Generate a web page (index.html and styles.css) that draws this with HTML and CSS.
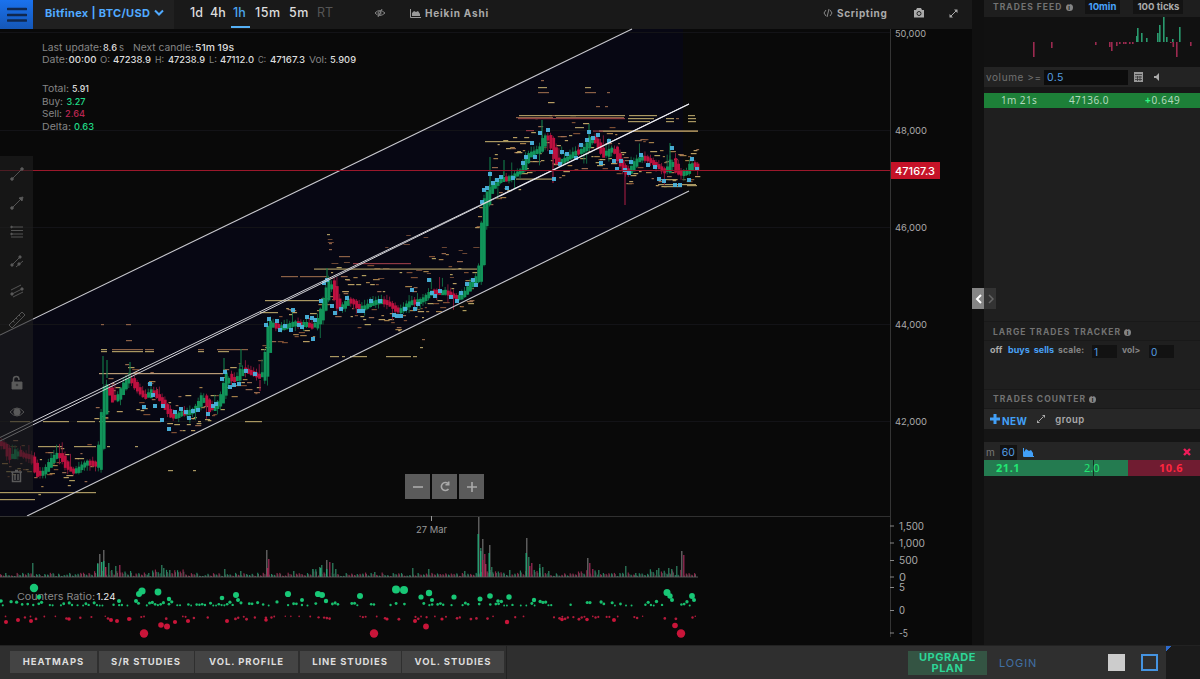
FILE: index.html
```html
<!DOCTYPE html>
<html lang="en">
<head>
<meta charset="utf-8">
<title>Bitfinex BTC/USD</title>
<link rel="stylesheet" href="styles.css">
</head>
<body>
<div class="app">
  <div class="workspace">
    <main class="main">
      <header class="topbar">
        <button class="menu" aria-label="Menu"><svg width="20" height="16"><path d="M1 2H19M1 8H19M1 13.500H19" stroke="#10284f" stroke-width="2.600" stroke-linecap="round"/></svg></button>
        <div class="pair"><span>Bitfinex | BTC/USD</span><svg width="12" height="8"><path d="M2 1.500L6 5.500L10 1.500" fill="none" stroke="#50aaff" stroke-width="2"/></svg></div>
        <nav class="frames"><span class="f1">1d</span><span class="f2">4h</span><span class="f3 active">1h</span><span class="f4">15m</span><span class="f5">5m</span><span class="f6">RT</span></nav>
        <svg class="hide" width="12" height="10" fill="none" stroke="#858585"><path d="M1 5Q5.500 0 11 5Q5.500 10 1 5M8 1L4 9"/><circle cx="5.500" cy="5" r="1.500"/></svg>
        <div class="candles"><svg width="11" height="9"><path d="M.5 0V8.500H11" stroke="#999" fill="none"/><path d="M2 7V4L4 2L6 3L8 2L10 5V7Z" fill="#999"/></svg><span>Heikin Ashi</span></div>
        <div class="script"><svg width="10" height="8" fill="none" stroke="#888"><path d="M3 1L1 4L3 7M7 1L9 4L7 7M6 0L4 8"/></svg><span>Scripting</span></div>
        <svg class="camera" width="12" height="10"><path d="M1 2H3L4 0H8L9 2H11V9.500H1Z" fill="#aaa"/><circle cx="6" cy="5.500" r="2" fill="none" stroke="#222"/></svg>
        <svg class="expand" width="9" height="9"><path d="M2 7L7 2" stroke="#aaa"/><path d="M5 .5H8.500V4ZM.5 5V8.500H4Z" fill="#aaa"/></svg>
      </header>
      <section class="chart-area">
        <svg id="chart" viewBox="0 29 972 616" width="972" height="616"></svg>
        <div class="tools">
          <svg viewBox="0 0 18 18"><path d="M4 14L14 4"/><circle cx="4" cy="14" r="1.300"/><circle cx="14" cy="4" r="1.300"/></svg>
          <svg viewBox="0 0 18 18"><path d="M4 14L13 5M11 4L15 3L14 7Z"/><circle cx="4" cy="14" r="1.300"/></svg>
          <svg viewBox="0 0 18 18"><path d="M3 4H15M3 7.500H15M3 11H15M3 14H15"/><circle cx="3.500" cy="4" r=".8"/><circle cx="3.500" cy="11" r=".8"/></svg>
          <svg viewBox="0 0 18 18"><path d="M4 12L12 4M8 14L15 8"/><circle cx="4" cy="12" r="1.200"/><circle cx="12" cy="4" r="1.200"/><circle cx="11" cy="11" r="1.200"/></svg>
          <svg viewBox="0 0 18 18"><path d="M3 8L13 3M4 12L14 7M5 15L15 10"/><circle cx="4" cy="12" r="1.200"/><circle cx="14" cy="7" r="1.200"/></svg>
          <svg viewBox="0 0 18 18"><path class="hollow" d="M1 14L14 1L17 4L4 17ZM5 10L6.500 11.500M8 7L9.500 8.500M11 4L12.500 5.500"/></svg>
          <svg class="lock" viewBox="0 0 18 18"><path d="M4 8H14V15H4Z"/><path class="hollow bold" d="M5.500 8V5Q5.500 2.500 8.500 2.500Q11 2.500 11 6"/><circle class="keyhole" cx="9" cy="11" r="1.300"/></svg>
          <svg viewBox="0 0 18 18"><path class="hollow" d="M2 9Q9 1 16 9Q9 17 2 9"/><circle cx="9" cy="9" r="3.200"/></svg>
          <svg class="trash" viewBox="0 0 18 18"><path class="hollow bold" d="M3 5H14M7 3.500H10M4.500 5V14.500H12.500V5M7 7V13M10 7V13"/></svg>
        </div>
        <div class="zoomer"><button><svg width="12" height="12"><path d="M1 6H11"/></svg></button><button><svg width="12" height="12"><path d="M9 2.500A4 4 0 1 0 9.500 8M6.500 3.700H9.700V.5"/></svg></button><button><svg width="12" height="12"><path d="M1 6H11M6 1V11"/></svg></button></div>
      </section>
    </main>
    <div class="gutter"></div>
    <aside class="side">
      <div class="head feed"><span class="title">TRADES FEED</span><i class="info">i</i><b class="chip on">10min</b><b class="chip">100 ticks</b></div>
      <svg id="feed" width="216" height="50" viewBox="984 17 216 50"></svg>
      <div class="volume"><span>volume &gt;=</span><b>0.5</b><svg width="9" height="10"><path d="M0 0H9V10H0Z" fill="#999"/><path d="M1 2.500H8M1 5H8M1 7.500H8M3.500 4V9M6 4V9" stroke="#333" stroke-width=".8"/></svg><svg class="speaker" width="6" height="8"><path d="M0 3H2L5 0V8L2 5H0Z" fill="#aaa"/></svg></div>
      <div class="trade"><span>1m 21s</span><span>47136.0</span><span><b>+</b>0.649</span></div>
      <div class="filler"></div>
      <div class="head large"><span class="title">LARGE TRADES TRACKER</span><i class="info">i</i></div>
      <div class="tracker"><b class="off">off</b><b class="blue">buys</b><b class="blue">sells</b><b class="lab scale">scale:</b><em>1</em><b class="lab vol">vol&gt;</b><em class="zero">0</em></div>
      <div class="head counter"><span class="title">TRADES COUNTER</span><i class="info">i</i></div>
      <div class="new"><svg width="10" height="10"><path d="M5 0V10M0 5H10" stroke="#42a0f8" stroke-width="3"/></svg><b>NEW</b><svg class="grow" width="8" height="8"><path d="M2 6L6 2" stroke="#aaa"/><path d="M5 0H8V3ZM0 5V8H3Z" fill="#aaa"/></svg><span>group</span></div>
      <div class="strip"></div>
      <div class="minutes"><span>m</span><em>60</em><svg width="11" height="9"><path d="M.5 0V8.500H11" stroke="#42a0f8" fill="none"/><path d="M1 8V4L3 1L6 3L8 2L10 5V8Z" fill="#42a0f8"/></svg><svg class="close" width="8" height="8"><path d="M1 1L7 7M7 1L1 7" stroke="#f01c5b" stroke-width="2.400"/></svg></div>
      <div class="ratio"><div class="buy"><b>21.1</b><span>2.0</span></div><div class="sell"><b>10.6</b></div></div>
      <div class="handle"><span><svg width="7" height="10"><path d="M6 1L2 5L6 9" fill="none" stroke="#fff" stroke-width="2"/></svg></span><span class="dim"><svg width="7" height="10"><path d="M2 1L6 5L2 9" fill="none" stroke="#666" stroke-width="1.500"/></svg></span></div>
    </aside>
  </div>
  <footer class="footer">
    <div class="tabs"><b class="t1">HEATMAPS</b><b class="t2">S/R STUDIES</b><b class="t3">VOL. PROFILE</b><b class="t4">LINE STUDIES</b><b class="t5">VOL. STUDIES</b></div>
    <b class="upgrade">UPGRADE<br>PLAN</b><span class="login">LOGIN</span><i class="swatch"></i><i class="swatch outline"></i><div class="corner"></div>
  </footer>
</div>
<script src="chart.js"></script>
</body>
</html>
```
FILE: styles.css
```css
* { box-sizing: border-box; }
body { margin: 0; background: #090909; font-family: Inter, "Open Sans", sans-serif; color: #aaa; overflow: hidden; }
button { border: 0; padding: 0; }
svg { display: block; flex: none; }
.app { width: 1200px; height: 679px; display: flex; flex-direction: column; }
.workspace { height: 645px; display: flex; }
.main { width: 972px; }
.topbar { height: 29px; background: #191919; display: flex; align-items: center; white-space: nowrap; padding-bottom: 3px; }
.menu { width: 33px; height: 29px; background: linear-gradient(#1a72ee, #1557b7); display: grid; place-items: center; margin-bottom: -3px; }
.pair { width: 141px; height: 29px; margin-bottom: -3px; padding: 0 0 3px 12px; display: flex; align-items: center; gap: 3px; background: #202020; color: #50aaff; font-size: 11px; font-weight: 700; letter-spacing: .32px; }
.frames { display: flex; margin-left: 16px; width: 184px; color: #ddd; font-size: 12.5px; font-weight: 500; line-height: 29px; height: 29px; padding-top: 2px; }
.frames span { height: 27px; line-height: 23px; }
.f1 { width: 20px; }
.f2 { width: 21px; }
.frames .active { width: 19px; margin-right: 5px; padding-left: 2px; color: #4ba6ed; border-bottom: 2px solid #55b0f5; }
.f4 { width: 34px; letter-spacing: .5px; }
.f5 { width: 28px; letter-spacing: .4px; }
.frames .f6 { color: #555; letter-spacing: 0; font-weight: 400; }
.hide { margin-right: 24px; }
.candles, .script { display: flex; align-items: center; gap: 4px; font-size: 10px; font-weight: 700; letter-spacing: .8px; color: #aaa; }
.candles { width: 413px; }
.script { width: 90px; letter-spacing: .65px; }
.camera { margin-right: 24px; }
.chart-area { position: relative; height: 616px; background: #090909; }
#chart { overflow: visible; }
#chart text { font-family: Inter, sans-serif; fill: #aaa; }
.tools { position: absolute; left: 0; top: 127px; width: 33px; height: 334px; padding-top: 9px; background: rgba(30, 30, 30, .62); display: flex; flex-direction: column; gap: 11.200px; align-items: center; }
.tools svg { width: 18px; height: 18px; fill: #5a5a5a; stroke: #5a5a5a; stroke-width: .9; }
.tools .hollow { fill: none; }
.tools .bold { stroke-width: 1.5; }
.tools .keyhole { fill: #151518; }
.tools .lock { margin-top: 34px; }
.tools .trash { margin-top: 34px; }
.zoomer { position: absolute; left: 405px; top: 445px; display: flex; gap: 2px; }
.zoomer button { width: 25px; height: 25px; background: #5b5b5b; display: grid; place-items: center; }
.zoomer svg { fill: none; stroke: #aaa; stroke-width: 1.600; }
.gutter { width: 12px; background: #101010; }
.side { position: relative; width: 216px; background: #171717; display: flex; flex-direction: column; }
.side > * { flex: none; }
.head { display: flex; align-items: center; padding-left: 9px; background: #1e1e1e; font-size: 8px; }
.title { font-weight: 700; font-size: 8.500px; letter-spacing: 1.05px; color: #727272; white-space: nowrap; }
.info { width: 7px; height: 7px; margin-left: 3px; border-radius: 50%; background: #858585; color: #111; font: 700 6px/7px Inter; text-align: center; }
.feed { height: 17px; padding-bottom: 3px; white-space: nowrap; }
.chip { height: 14px; line-height: 14px; margin-left: 12px; padding: 0 4px; background: #131313; color: #aaa; font-size: 9.600px; }
.chip.on { color: #48a2fb; }
.chip + .chip { margin-left: 13px; }
#feed { background: #111; }
.volume { height: 20px; padding-left: 2px; background: #232323; display: flex; align-items: center; font-size: 10px; white-space: nowrap; }
.volume span { width: 58px; color: #717171; letter-spacing: .6px; }
.volume b { width: 84px; height: 15px; padding-left: 3px; background: #0c0c0c; font-size: 10.500px; line-height: 15px; color: #549ee2; font-weight: 400; margin-right: 6px; letter-spacing: .4px; }
.speaker { margin-left: 11px; }
.trade { margin-top: 6px; height: 15px; display: flex; background: #1d8038; color: #b2d9bd; font: 10px/15px "Noto Sans", sans-serif; letter-spacing: .4px; }
.trade span:nth-child(1) { width: 85px; padding-left: 17px; }
.trade span:nth-child(2) { width: 76px; }
.trade span:nth-child(3) { letter-spacing: .7px; }
.trade b { color: #31f584; }
.filler { height: 213px; background: #1f1f1f; }
.large { height: 20px; padding-top: 2px; border-block: 1px solid #191919; }
.tracker { height: 48px; background: #1f1f1f; display: flex; align-items: flex-start; padding: 3px 0 0 6px; font-size: 9px; line-height: 12px; white-space: nowrap; }
.off { width: 18px; color: #aaa; }
.blue { color: #49a1f6; margin-right: 4px; }
.tracker .lab { color: #858585; font-size: 8.500px; }
.tracker .scale { width: 34px; letter-spacing: .2px; }
.tracker .vol { width: 27px; }
.tracker em { width: 25px; height: 13px; margin: 1px 5px 0 0; padding-left: 2px; background: #121212; font: 10px/14px Inter; color: #549ee2; }
.counter { height: 20px; background: #1f1f1f; border-block: 1px solid #191919; }
.new { height: 20px; background: #272727; display: flex; align-items: center; padding-left: 6px; font-size: 9.500px; }
.new b { color: #42a0f8; margin-left: 2px; padding-top: 3px; font-size: 10px; letter-spacing: .4px; }
.grow { margin-left: 10px; }
.new span { margin-left: 10px; font-weight: 600; color: #aaa; letter-spacing: .45px; }
.strip { height: 13px; background: #151515; }
.minutes { height: 18px; background: #252525; display: flex; align-items: center; padding: 2px 9px 0 2px; font-size: 10px; color: #777; }
.minutes em { margin: 0 6px 0 5px; height: 15px; width: 17px; font: 10.500px/15px Inter; color: #549ee2; background: #121212; text-align: center; }
.close { margin-left: auto; }
.ratio { height: 16px; display: flex; color: #22e773; font: 11px/16px "Noto Sans"; }
.buy { width: 144px; background: linear-gradient(90deg, #247b50 109px, #142c20 109px, #142c20 110px, #247b50 110px); display: flex; padding-left: 12px; }
.buy b { width: 88px; }
.buy b, .sell { letter-spacing: .55px; }
.sell { flex: 1; padding-left: 31px; color: #ff263f; background: #701c31; }
.handle { position: absolute; top: 288px; left: -12px; display: flex; }
.handle span { width: 12px; height: 21px; background: #858585; display: grid; place-items: center; }
.handle .dim { background: #333; }
.footer { height: 34px; display: flex; align-items: center; background: #2f2f2f; border-top: 1px solid #222; }
.tabs { width: 507px; height: 33px; padding: 5px 0 6px 10px; display: flex; gap: 1.500px; border-right: 1px solid #222; }
.tabs b { background: #444; font-size: 9.500px; line-height: 22px; text-align: center; color: #ddd; letter-spacing: .95px; white-space: nowrap; }
.t1 { width: 87px; }
.t2 { width: 95px; }
.t3 { width: 103px; }
.t4 { width: 101px; }
.t5 { width: 102px; }
.upgrade { width: 79px; height: 24px; margin-left: 401px; padding-top: 1px; background: #345443; color: #2dd697; font-size: 11px; line-height: 11.500px; text-align: center; letter-spacing: .5px; }
.login { width: 109px; margin-left: 12px; color: #4170a5; font-size: 11px; letter-spacing: .9px; }
.swatch { width: 17px; height: 17px; background: #ccc; margin-right: 16px; }
.outline { border: 2px solid #4594e1; background: none; margin-right: 8px; }
.corner { width: 34px; height: 34px; background: linear-gradient(135deg, #2c6acc 4px, #1b1b1b 4px); }
```
FILE: chart.js
```js
const NS = 'http://www.w3.org/2000/svg';
const chart = document.getElementById('chart');
let seed = 17;
const rnd = () => (seed = (seed * 16807) % 2147483647) / 2147483647;

function add(parent, tag, attrs, text) {
  const el = document.createElementNS(NS, tag);
  for (const k in attrs) el.setAttribute(k, attrs[k]);
  if (text !== undefined) el.textContent = text;
  parent.appendChild(el);
}
const line = (x1, y1, x2, y2, stroke, w = 1) => add(chart, 'line', {x1, y1, x2, y2, stroke, 'stroke-width': w});
const rect = (x, y, width, height, fill, opacity = 1) => add(chart, 'rect', {x, y, width, height, fill, opacity});
const label = (x, y, width, text, color, size = 10, weight = 400) =>
  add(chart, 'text', {x, y, textLength: width, lengthAdjust: 'spacingAndGlyphs', style: `fill:${color};font-size:${size}px;font-weight:${weight}`}, text);

// Trend channel
add(chart, 'path', {d: 'M0 335L632 29H683V194L27 516H0Z', fill: '#070713'});
[32.5, 130.5, 227.5, 324.5, 421.5].forEach(y => line(0, y, 890, y, '#131317'));

// Mid price of the candles at turning points
const price = [0,443,5,450,8,460,12,456,15,450,20,456,28,456,31,461,36,476,40,474,44,470,50,460,56,453,60,457,65,467,73,473,80,466,88,461,92,466,96,464,99,440,102,405,105,383,108,392,112,401,116,398,119,392,125,380,130,379,134,387,140,394,145,399,150,389,155,396,160,401,166,411,172,419,178,413,185,413,192,411,197,404,201,396,205,402,209,411,214,407,219,400,223,385,226,374,230,381,236,379,240,369,245,371,252,374,260,378,263,370,266,342,268,326,272,322,275,328,280,328,286,326,293,323,300,325,306,324,312,328,318,318,323,300,328,281,331,285,334,298,338,310,343,305,347,299,352,302,358,310,362,308,370,303,380,301,388,304,396,312,402,309,408,302,415,302,420,301,427,294,430,291,437,293,445,292,452,297,457,299,464,292,470,283,474,280,478,272,480,240,483,208,488,190,495,183,500,178,505,180,512,176,520,170,525,158,530,152,535,153,539,148,543,137,547,136,551,149,555,163,560,161,567,158,573,152,580,152,585,146,590,137,594,141,600,152,603,157,608,150,612,148,618,162,625,174,629,170,635,160,642,157,650,162,658,168,664,173,668,165,671,158,675,171,680,175,686,172,690,163,694,165,698,170];
function mid(x) {
  for (let i = 0; i < price.length - 2; i += 2)
    if (x <= price[i + 2]) return price[i + 1] + (price[i + 3] - price[i + 1]) * (x - price[i]) / (price[i + 2] - price[i]);
  return price[price.length - 1];
}

// Scattered liquidity levels
const tones = ['#b58c50', '#ccae6b', '#8a5737', '#a57354', '#c2ad67'];
for (let x = 2; x < 697; x += 1.4) {
  const busy = x > 335 && x < 480 || x > 485;
  if (rnd() > (busy ? .85 : .6)) continue;
  const below = rnd() < .6;
  let y = mid(x) + (below ? 5 + rnd() * 14 : -8 - rnd() * (x > 600 ? 15 : busy ? 32 : 10));
  if (x > 90 && x < 108 || x > 257 && x < 272 || x > 474 && x < 490) y = mid(x + 8) + 12 + rnd() * 12;
  rect(x, Math.round(y), 2 + rnd() * 5, 1.2, tones[Math.floor(rnd() * 5)], .9);
}
for (let i = 0; i < 20; i++) rect(325 + rnd() * 155, Math.round(235 + rnd() * 45), 3 + rnd() * 4, 1, '#8e5c40', .75);

// Long horizontal levels
const gold = '#a99761', dark = '#8b6045', red = '#8e3843';
[[0,492,96,gold],[0,499,35,gold],[43,421,26,gold],[77,421,18,gold],[99,421,62,gold],[10,421,20,gold],[245,421,17,gold],
 [38,446,24,gold],[74,446,22,gold],[107,446,3,gold],[135,446,3,gold],[99,373,124,'#b99b76'],[101,349,6,gold],[101,351,6,gold],[112,349,31,dark],[112,351,31,gold],
 [145,349,9,dark],[145,351,9,gold],[198,349,6,dark],[198,351,6,gold],[217,349,31,dark],[218,351,11,gold],[126,340,6,dark],
 [168,470,5,gold],[193,470,3,gold],[101,324,3,dark],[126,324,5,dark],[265,300,58,gold],[281,276,17,dark],[300,276,27,dark],[314,268.5,163,gold],
 [353,263,58,red],[339,256,11,dark],[260,312,18,gold],[330,356,9,gold],[342,356,3,gold],[350,356,17,gold],[386,356,25,gold],[413,356,4,gold],
 [420,347,3,gold],[422,339,3,dark],[327,234,3,gold],[329,243,3,dark],[329,249,3,dark],
 [519,115,33,gold],[555,115,70,gold],[518,118,107,red],[516,117,37,dark],[556,117,68,dark],[629,115,28,gold],[628,118,26,gold],[628,121,22,gold],[666,118,8,gold],[666,121,8,gold],[676,118,3,dark],[688,115,7,gold],[688,118,8,gold],[688,121,8,gold],
 [538,87,9,gold],[538,92,11,dark],[585,87,6,gold],[585,92,11,dark],[541,80,3,dark],[607,92,3,dark],[485,141,45,gold],[599,130.500,99,'#e0bb75'],[593,130.500,10,red],
 [516,178.500,39,gold],[657,179,20,gold],[658,184,38,gold],[664,186,18,gold],[687,185,10,gold],[575,127,9,gold],[526,130,8,red],[596,106,4,dark],[605,106,3,dark]
].forEach(([x, y, w, c]) => rect(x, y, w, 1.2, c));

// Heikin Ashi candles
for (let i = 0; i < 252; i++) {
  const x = i * 2.775, a = mid(Math.max(0, x - 4)), b = mid(x + 1), up = b < a;
  const c = up ? '#11945a' : '#bd103f', h = Math.max(5, Math.abs(b - a) * 1.25), y = (a + b) / 2;
  const long = rnd() > .82 ? 13 : 4;
  rect(x + .7, y - h / 2 - rnd() * long - 1, .9, h + 3 + rnd() * long, up ? '#147347' : '#8d193b');
  rect(x, y - h / 2, 2.9, h, c);
}
[[103,356,384,1],[107,360,378,1],[130,362,380,1],[224,358,372,1],[241,349,367,1],[260,380,391,0],[327,268,283,1],[490,157,190,1],[504,160,176,1],[542,120,138,1],[589,124,138,1],[625,172,205,0],[670,143,160,1],[553,154,183,0]].forEach(([x, y1, y2, up]) => line(x, y1, x, y2, up ? '#127747' : '#971b3e', 1.2));

// Signal markers
const marks = [150,384,153,395,144,407,155,406,163,406,162,420,169,429,175,412,181,409,186,412,189,418,193,411,198,410,208,414,213,406,216,404,222,379,225,372,230,387,234,385,239,384,246,371,255,374,266,325,269,319,277,321,280,330,285,326,291,330,293,310,299,325,302,327,307,317,312,318,313,339,315,320,321,301,324,283,327,280,332,306,335,313,341,309,347,298,359,311,363,311,371,301,380,301,394,315,397,316,401,316,405,309,412,290,415,309,418,304,429,280,432,293,435,296,440,291,451,297,457,301,461,293,467,284,473,280,476,285,482,202,484,190,487,188,490,174,493,183,497,180,501,177,507,188,513,178,523,163,526,157,532,143,535,157,540,133,548,130,551,152,554,179,560,164,562,152,567,154,576,158,581,145,587,140,589,132,593,138,598,135,601,163,609,141,614,161,617,169,621,161,625,170,629,173,631,162,641,155,648,165,655,167,659,179,664,181,672,148,675,185,680,185,689,180,692,159,697,169];
for (let i = 0; i < marks.length; i += 2) rect(marks[i] - 2, marks[i + 1] - 2, 4, 4, '#4ab3dd', .95);

// Channel rails and current price
line(0, 335, 632, 29, '#c9c9cf', 1.1);
line(0, 437.5, 689, 104, '#d2d2d7', 1);
line(0, 441, 500, 196, '#d2d2d7', 1);
line(500, 196, 689, 104, '#eeeef4', 1.3);
line(27, 516, 689, 191, '#c9c9cf', 1.1);
line(0, 170.5, 890, 170.5, '#9b182b');

// Axes
line(890.5, 29, 890.5, 637, '#343434');
line(0, 516.5, 890, 516.5, '#303030');
line(431.5, 516, 431.5, 521, '#999');
[['50,000',36.5],['48,000',133.5],['46,000',230.5],['44,000',327.5],['42,000',425]].forEach(([t, y]) => label(895, y, t === '50,000' ? 31 : 32, t, '#aaa', 9.5));
[['1,500',526,25],['1,000',543,26],['500',560.5,19],['0',577,7],['5',587.5,6],['0',610.5,6],['-5',633,9]].forEach(([t, y, w]) => { line(890, y, 894, y, '#888'); label(899, y + 3.5, w, t, '#aaa', 10); });
rect(891, 162, 49, 17, '#c51328');
label(895, 174.500, 40, '47167.3', '#fff', 11, 500);
label(416, 532.500, 31, '27 Mar', '#999', 9.5);

// Volume
const spikes = [5,4,32,14,97,14,99,23,103,27,108,14,111,7,115,11,119,12,148,4,161,12,163,9,169,7,224,8,240,6,266,27,268,18,293,6,312,8,319,10,321,12,326,17,329,15,332,14,335,8,374,5,412,9,428,8,464,6,478,60,480,29,482,38,484,23,489,32,491,10,509,7,526,39,528,20,531,14,539,13,542,10,548,6,587,19,589,14,592,8,598,7,625,11,635,4,656,7,658,9,668,9,671,8,676,11,681,26,683,22];
for (let i = 0; i < 252; i++) {
  const x = i * 2.765, near = [112,165,325,485,530,590,665].some(v => Math.abs(v - x) < 18), h = 1 + rnd() * (near ? 7 : 3.5);
  rect(x, 577 - h, 1.2, h, rnd() > .5 ? '#1c8560' : '#8d2549');
  rect(x + 1, 577 - h * .7, .8, h * .7, '#666');
}
for (let i = 0; i < spikes.length; i += 2) {
  const [x, h] = [spikes[i], spikes[i + 1]];
  const c = [33,99,103,266,326,478,482,489,526,587,681].includes(x) ? '#5c5c5c' : [119,268,329,484,531,589,592,683].includes(x) ? '#84244a' : '#286d52';
  rect(x, 577 - h, 1.5, h, c);
}
[[97,13],[101,15],[103,16],[320,9],[326,8],[477.5,43],[480,26],[488.5,24],[525.5,24],[539,9]].forEach(([x, h]) => rect(x, 577 - h, 1.4, h, '#25a274'));
[[105,10],[482,17],[485,13],[267,9],[529,11]].forEach(([x, h]) => rect(x, 577 - h, 1.4, h, '#a32b54'));
line(0, 577, 698, 577, '#656565', .8);

// Counters ratio
label(17, 600, 78, 'Counters Ratio:', '#888', 9.5);
label(96.500, 600, 19, '1.24', '#eee', 9.5);
const dot = (cx, cy, r, fill) => add(chart, 'circle', {cx, cy, r, fill});
for (let i = 0; i < 252; i++) {
  const k = rnd(), t = rnd();
  if (k < .52) dot(i * 2.77, 605.5 - t * t * 4, .9 + t * .8, '#18bd6d');
  else if (k < .76) dot(i * 2.77, 616.300 + t * t * 3, .75 + t * .7, '#b31b3c');
}
[[34,588,4.2],[1,601,1.8],[39,597,2.3],[139,594,3],[142,591,3.6],[158,592,3.4],[136,601,2],[119,601,2],[169,599,2.2],[222,598,2.3],[236,595,3],[238,600,2],[288,594,3.1],[302,600,2],[318,594,3.1],[322,595,3],[326,601,2.2],[360,596,3],[396,589.500,4],[404,590,4],[421,597,2.6],[429,593,3.2],[432,600,2.1],[454,597,2.6],[480,599,2.5],[490,596,2.8],[498,601,1.8],[509,597,2.7],[534,600,2.2],[667,592.500,3.5],[670,596,2.7],[672,600,2],[692,596,2.9],[694,600,2]].forEach(d => dot(...d, '#18c776'));
[[6,622,2],[18,620,2],[31,621,2],[69,619,1.800],[111,620,2],[117,621,2],[129,619,2],[144,633.500,4.2],[161,625,2.8],[167,626.500,3],[175,622,2.1],[188,621,2.1],[227,621,2],[266,620,1.8],[374,633.500,4.2],[387,619,1.6],[415,621,2],[426,626.500,2.9],[442,619,1.6],[507,622,2.2],[562,619.500,1.8],[587,619.500,1.8],[614,620,2],[675,625.500,2.8],[681,633.500,4.2]].forEach(d => dot(...d, '#c91539'));

// Legend
const g = '#858585', w = '#ddd';
[[42,51,60,'Last update:',g],[103,51,14,'8.6',w],[119,51,5,'s',g],[133,51,61,'Next candle:',g],[195,51,39,'51m 19s',w],
 [42,63,26,'Date:',g],[68.500,63,28,'00:00',w],[100,63,10,'O:',g],[113,63,38,'47238.9',w],[155,63,9,'H:',g],[168,63,37,'47238.9',w],[209,63,8,'L:',g],[220,63,34,'47112.0',w],[258,63,8,'C:',g],[270,63,35,'47167.3',w],[309,63,18,'Vol:',g],[330,63,26,'5.909',w],
 [42,92,27,'Total:',g],[72,92,17,'5.91',w],[42,104.500,21,'Buy:',g],[66.500,104.500,19,'3.27','#20d987'],[42,117,20,'Sell:',g],[65,117,20,'2.64','#b92651'],[42,129.500,29,'Delta:',g],[74,129.500,20,'0.63','#20d987']
].forEach(([x, y, width, t, c]) => label(x, y, width, t, c, 9.3, c === g ? 400 : 500));

// Trades feed bars, positive up from the zero line at y=42
const feed = document.getElementById('feed');
[[1033,-15],[1051,-6],[1095,-3],[1109,-5],[1111,-9],[1116,-4],[1119,-2],[1123,-2],[1125,-2],[1129,-2],[1132,-2],[1136,6],[1137,14],[1141,9],[1146,4],[1157,9],[1159,17],[1163,26],[1166,5],[1170,-1],[1172,3],[1172.500,-5],[1176,-15],[1179,15],[1190,-4]].forEach(([x, h]) =>
  add(feed, 'rect', {x, y: h > 0 ? 42 - h : 42, width: 1.6, height: Math.abs(h), fill: h > 0 ? '#2a9a6e' : '#9c2a50'}));
```
